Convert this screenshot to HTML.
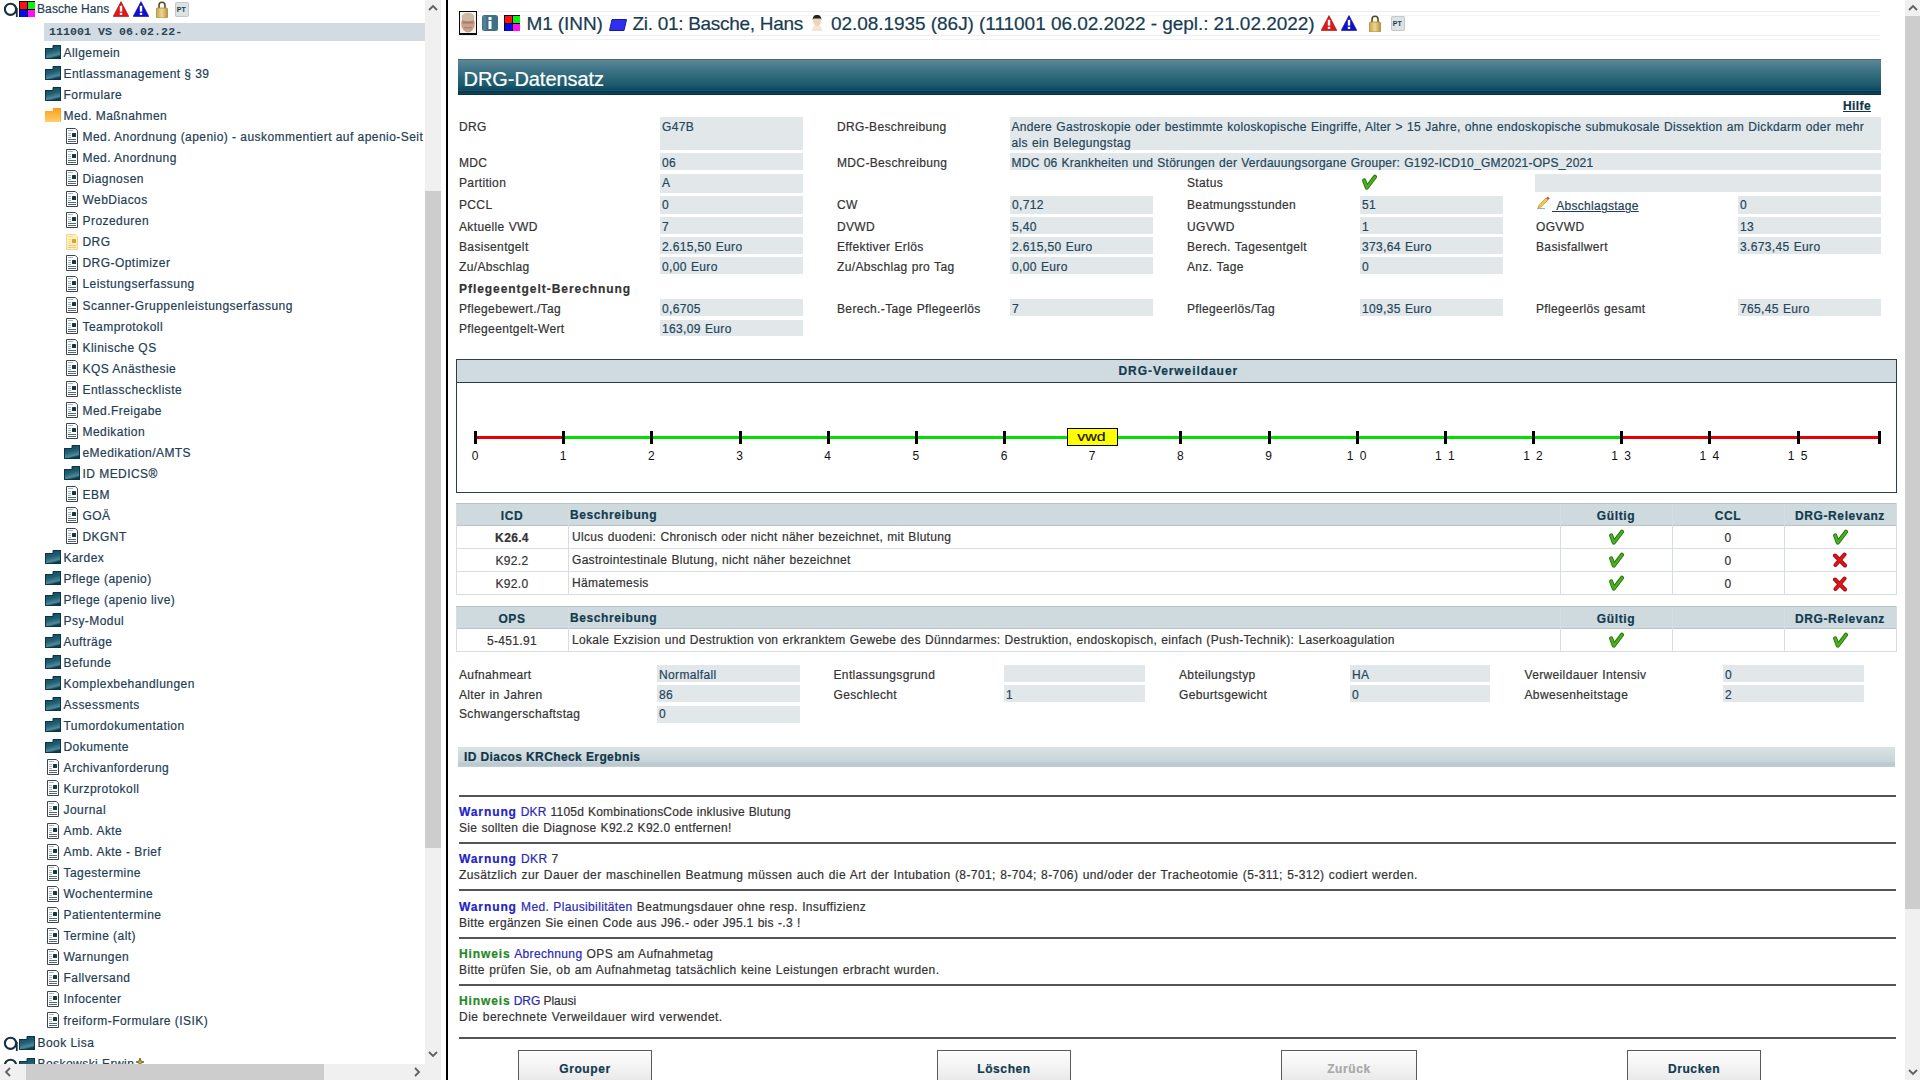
<!DOCTYPE html><html><head><meta charset="utf-8"><title>DRG-Datensatz</title><style>
*{margin:0;padding:0;box-sizing:border-box}
html,body{width:1920px;height:1080px;overflow:hidden;background:#fff}
body{position:relative;font-family:"Liberation Sans", sans-serif;color:#333}
.t{position:absolute;white-space:nowrap;-webkit-text-stroke:0.2px currentColor}
.tr{color:#1f4054;letter-spacing:0.45px}
.lb{color:#333;letter-spacing:0.35px;word-spacing:0.5px}
.vl{color:#22465a;letter-spacing:0.35px;word-spacing:0.5px}
.bx{position:absolute;background:#e2e7ea}
.hd{color:#123b50;font-weight:bold;letter-spacing:0.6px}
.ic{position:absolute}
</style></head><body>
<svg class="ic" style="left:3px;top:2px" width="16" height="16" viewBox="0 0 16 16"><circle cx="7.5" cy="7.3" r="5.6" fill="none" stroke="#16303f" stroke-width="2.1"/><path d="M13.8 6v9" stroke="#16303f" stroke-width="1.8"/></svg>
<svg class="ic" style="left:19px;top:1px" width="16" height="16" viewBox="0 0 16 16"><rect x="0" y="0" width="16" height="16" fill="#100818"/><rect x="1" y="1" width="7" height="7" fill="#ff1010"/><rect x="9" y="1" width="7" height="7" fill="#10f010"/><rect x="1" y="9" width="7" height="7" fill="#0808f0"/><rect x="9" y="9" width="7" height="7" fill="#ff10f8"/></svg>
<div class="t tr" style="left:37px;top:1.34px;font-size:12px;line-height:16px;letter-spacing:0.1px">Basche Hans</div>
<svg class="ic" style="left:113px;top:1px" width="16" height="16" viewBox="0 0 16 16"><path d="M8 0.6L15.8 15.4H0.2z" fill="#e01818" stroke="#a00000" stroke-width="0.6" stroke-linejoin="round"/><rect x="6.8" y="4.8" width="2.4" height="5.8" fill="#fff"/><rect x="6.8" y="11.8" width="2.4" height="2.2" fill="#fff"/></svg>
<svg class="ic" style="left:133px;top:1px" width="16" height="16" viewBox="0 0 16 16"><path d="M8 0.6L15.8 15.4H0.2z" fill="#1010d0" stroke="#000080" stroke-width="0.6" stroke-linejoin="round"/><rect x="6.8" y="4.8" width="2.4" height="5.8" fill="#fff"/><rect x="6.8" y="11.8" width="2.4" height="2.2" fill="#fff"/></svg>
<svg class="ic" style="left:156px;top:1px" width="12" height="17" viewBox="0 0 12 17"><path d="M3 8V4.2a3 3 0 0 1 6 0V8" fill="none" stroke="#5a4a20" stroke-width="1.6"/><defs><linearGradient id="lk156" x1="0" y1="0" x2="1" y2="0"><stop offset="0" stop-color="#c9a850"/><stop offset="0.5" stop-color="#ecd690"/><stop offset="1" stop-color="#b89440"/></linearGradient></defs><rect x="0.5" y="7" width="11" height="10" rx="1" fill="url(#lk156)"/><rect x="0.5" y="7" width="11" height="10" rx="1" fill="none" stroke="#a88a3a" stroke-width="0.8"/></svg>
<svg class="ic" style="left:175px;top:2px" width="14" height="15" viewBox="0 0 14 15"><rect x="0" y="0" width="14" height="15" rx="1.5" fill="#dde2e5"/><rect x="0.5" y="0.5" width="13" height="14" rx="1.5" fill="none" stroke="#c2c8cc"/><text x="1.8" y="10" font-family="Liberation Sans" font-weight="bold" font-size="7" fill="#1e3a4a">PT</text></svg>
<div style="position:absolute;left:44px;top:23px;width:381px;height:18px;background:#d2dbe1"></div>
<div class="t" style="left:49px;top:23.5px;font-family:'Liberation Mono',monospace;font-weight:bold;font-size:11.6px;line-height:16px;color:#2a4558;-webkit-text-stroke:0;letter-spacing:0.05px">111001 VS 06.02.22-</div>
<div style="position:absolute;left:0;top:0;width:425px;height:1064px;overflow:hidden">
<svg class="ic" style="left:45px;top:45px" width="16" height="14" viewBox="0 0 16 14"><defs><linearGradient id="fg45_45" x1="0" y1="0" x2="0.3" y2="1"><stop offset="0" stop-color="#0f4356"/><stop offset="0.55" stop-color="#215f72"/><stop offset="0.85" stop-color="#4d8a9c"/><stop offset="1" stop-color="#0e3c4d"/></linearGradient></defs><path d="M8 0h8v14H0V3h8z" fill="url(#fg45_45)"/><path d="M8 0.5h7.5V13.5H0.5V3.5H8z" fill="none" stroke="#0b3546" stroke-width="1"/></svg>
<div class="t tr" style="left:63.5px;top:45.14px;font-size:12px;line-height:16px;">Allgemein</div>
<svg class="ic" style="left:45px;top:66px" width="16" height="14" viewBox="0 0 16 14"><defs><linearGradient id="fg45_66" x1="0" y1="0" x2="0.3" y2="1"><stop offset="0" stop-color="#0f4356"/><stop offset="0.55" stop-color="#215f72"/><stop offset="0.85" stop-color="#4d8a9c"/><stop offset="1" stop-color="#0e3c4d"/></linearGradient></defs><path d="M8 0h8v14H0V3h8z" fill="url(#fg45_66)"/><path d="M8 0.5h7.5V13.5H0.5V3.5H8z" fill="none" stroke="#0b3546" stroke-width="1"/></svg>
<div class="t tr" style="left:63.5px;top:66.17px;font-size:12px;line-height:16px;">Entlassmanagement § 39</div>
<svg class="ic" style="left:45px;top:87px" width="16" height="14" viewBox="0 0 16 14"><defs><linearGradient id="fg45_87" x1="0" y1="0" x2="0.3" y2="1"><stop offset="0" stop-color="#0f4356"/><stop offset="0.55" stop-color="#215f72"/><stop offset="0.85" stop-color="#4d8a9c"/><stop offset="1" stop-color="#0e3c4d"/></linearGradient></defs><path d="M8 0h8v14H0V3h8z" fill="url(#fg45_87)"/><path d="M8 0.5h7.5V13.5H0.5V3.5H8z" fill="none" stroke="#0b3546" stroke-width="1"/></svg>
<div class="t tr" style="left:63.5px;top:87.20px;font-size:12px;line-height:16px;">Formulare</div>
<svg class="ic" style="left:45px;top:108px" width="16" height="14" viewBox="0 0 16 14"><defs><linearGradient id="og45_108" x1="0" y1="0" x2="0" y2="1"><stop offset="0" stop-color="#ff9d10"/><stop offset="1" stop-color="#ffcf70"/></linearGradient></defs><path d="M8 0h8v14H0V3h8z" fill="url(#og45_108)"/><path d="M8.5 0.5h7v13" fill="none" stroke="#f0a030" stroke-width="1" opacity="0.6"/></svg>
<div class="t tr" style="left:63.5px;top:108.23px;font-size:12px;line-height:16px;">Med. Maßnahmen</div>
<svg class="ic" style="left:66px;top:128px" width="12" height="16" viewBox="0 0 12 16"><path d="M0.5 15.5V0.5H9.3L11.5 2.8V15.5z" fill="#fff" stroke="#3a474d" stroke-width="1"/><path d="M2 2.5h5M2 5.5h3M2 7.5h3M2 9.5h3" stroke="#9fb7bf" stroke-width="1"/><path d="M2 11.5h8M2 13.5h8" stroke="#556870" stroke-width="1"/><rect x="6" y="5" width="4" height="4" rx="0.6" fill="#123a3c"/></svg>
<div class="t tr" style="left:82.5px;top:129.26px;font-size:12px;line-height:16px;">Med. Anordnung (apenio) - auskommentiert auf apenio-Seit</div>
<svg class="ic" style="left:66px;top:149px" width="12" height="16" viewBox="0 0 12 16"><path d="M0.5 15.5V0.5H9.3L11.5 2.8V15.5z" fill="#fff" stroke="#3a474d" stroke-width="1"/><path d="M2 2.5h5M2 5.5h3M2 7.5h3M2 9.5h3" stroke="#9fb7bf" stroke-width="1"/><path d="M2 11.5h8M2 13.5h8" stroke="#556870" stroke-width="1"/><rect x="6" y="5" width="4" height="4" rx="0.6" fill="#123a3c"/></svg>
<div class="t tr" style="left:82.5px;top:150.29px;font-size:12px;line-height:16px;">Med. Anordnung</div>
<svg class="ic" style="left:66px;top:170px" width="12" height="16" viewBox="0 0 12 16"><path d="M0.5 15.5V0.5H9.3L11.5 2.8V15.5z" fill="#fff" stroke="#3a474d" stroke-width="1"/><path d="M2 2.5h5M2 5.5h3M2 7.5h3M2 9.5h3" stroke="#9fb7bf" stroke-width="1"/><path d="M2 11.5h8M2 13.5h8" stroke="#556870" stroke-width="1"/><rect x="6" y="5" width="4" height="4" rx="0.6" fill="#123a3c"/></svg>
<div class="t tr" style="left:82.5px;top:171.32px;font-size:12px;line-height:16px;">Diagnosen</div>
<svg class="ic" style="left:66px;top:191px" width="12" height="16" viewBox="0 0 12 16"><path d="M0.5 15.5V0.5H9.3L11.5 2.8V15.5z" fill="#fff" stroke="#3a474d" stroke-width="1"/><path d="M2 2.5h5M2 5.5h3M2 7.5h3M2 9.5h3" stroke="#9fb7bf" stroke-width="1"/><path d="M2 11.5h8M2 13.5h8" stroke="#556870" stroke-width="1"/><rect x="6" y="5" width="4" height="4" rx="0.6" fill="#123a3c"/></svg>
<div class="t tr" style="left:82.5px;top:192.35px;font-size:12px;line-height:16px;">WebDiacos</div>
<svg class="ic" style="left:66px;top:212px" width="12" height="16" viewBox="0 0 12 16"><path d="M0.5 15.5V0.5H9.3L11.5 2.8V15.5z" fill="#fff" stroke="#3a474d" stroke-width="1"/><path d="M2 2.5h5M2 5.5h3M2 7.5h3M2 9.5h3" stroke="#9fb7bf" stroke-width="1"/><path d="M2 11.5h8M2 13.5h8" stroke="#556870" stroke-width="1"/><rect x="6" y="5" width="4" height="4" rx="0.6" fill="#123a3c"/></svg>
<div class="t tr" style="left:82.5px;top:213.38px;font-size:12px;line-height:16px;">Prozeduren</div>
<svg class="ic" style="left:66px;top:234px" width="12" height="16" viewBox="0 0 12 16"><path d="M0.5 15.5V0.5H9.3L11.5 2.8V15.5z" fill="#fff2c2" stroke="#f2d58a" stroke-width="1"/><path d="M2 2.5h5M2 5.5h3M2 7.5h3M2 9.5h3" stroke="#f8dc90" stroke-width="1"/><path d="M2 11.5h8M2 13.5h8" stroke="#f0c878" stroke-width="1"/><rect x="6" y="5" width="4" height="4" rx="0.6" fill="#dca030"/></svg>
<div class="t tr" style="left:82.5px;top:234.41px;font-size:12px;line-height:16px;">DRG</div>
<svg class="ic" style="left:66px;top:255px" width="12" height="16" viewBox="0 0 12 16"><path d="M0.5 15.5V0.5H9.3L11.5 2.8V15.5z" fill="#fff" stroke="#3a474d" stroke-width="1"/><path d="M2 2.5h5M2 5.5h3M2 7.5h3M2 9.5h3" stroke="#9fb7bf" stroke-width="1"/><path d="M2 11.5h8M2 13.5h8" stroke="#556870" stroke-width="1"/><rect x="6" y="5" width="4" height="4" rx="0.6" fill="#123a3c"/></svg>
<div class="t tr" style="left:82.5px;top:255.44px;font-size:12px;line-height:16px;">DRG-Optimizer</div>
<svg class="ic" style="left:66px;top:276px" width="12" height="16" viewBox="0 0 12 16"><path d="M0.5 15.5V0.5H9.3L11.5 2.8V15.5z" fill="#fff" stroke="#3a474d" stroke-width="1"/><path d="M2 2.5h5M2 5.5h3M2 7.5h3M2 9.5h3" stroke="#9fb7bf" stroke-width="1"/><path d="M2 11.5h8M2 13.5h8" stroke="#556870" stroke-width="1"/><rect x="6" y="5" width="4" height="4" rx="0.6" fill="#123a3c"/></svg>
<div class="t tr" style="left:82.5px;top:276.47px;font-size:12px;line-height:16px;">Leistungserfassung</div>
<svg class="ic" style="left:66px;top:297px" width="12" height="16" viewBox="0 0 12 16"><path d="M0.5 15.5V0.5H9.3L11.5 2.8V15.5z" fill="#fff" stroke="#3a474d" stroke-width="1"/><path d="M2 2.5h5M2 5.5h3M2 7.5h3M2 9.5h3" stroke="#9fb7bf" stroke-width="1"/><path d="M2 11.5h8M2 13.5h8" stroke="#556870" stroke-width="1"/><rect x="6" y="5" width="4" height="4" rx="0.6" fill="#123a3c"/></svg>
<div class="t tr" style="left:82.5px;top:297.50px;font-size:12px;line-height:16px;">Scanner-Gruppenleistungserfassung</div>
<svg class="ic" style="left:66px;top:318px" width="12" height="16" viewBox="0 0 12 16"><path d="M0.5 15.5V0.5H9.3L11.5 2.8V15.5z" fill="#fff" stroke="#3a474d" stroke-width="1"/><path d="M2 2.5h5M2 5.5h3M2 7.5h3M2 9.5h3" stroke="#9fb7bf" stroke-width="1"/><path d="M2 11.5h8M2 13.5h8" stroke="#556870" stroke-width="1"/><rect x="6" y="5" width="4" height="4" rx="0.6" fill="#123a3c"/></svg>
<div class="t tr" style="left:82.5px;top:318.53px;font-size:12px;line-height:16px;">Teamprotokoll</div>
<svg class="ic" style="left:66px;top:339px" width="12" height="16" viewBox="0 0 12 16"><path d="M0.5 15.5V0.5H9.3L11.5 2.8V15.5z" fill="#fff" stroke="#3a474d" stroke-width="1"/><path d="M2 2.5h5M2 5.5h3M2 7.5h3M2 9.5h3" stroke="#9fb7bf" stroke-width="1"/><path d="M2 11.5h8M2 13.5h8" stroke="#556870" stroke-width="1"/><rect x="6" y="5" width="4" height="4" rx="0.6" fill="#123a3c"/></svg>
<div class="t tr" style="left:82.5px;top:339.56px;font-size:12px;line-height:16px;">Klinische QS</div>
<svg class="ic" style="left:66px;top:360px" width="12" height="16" viewBox="0 0 12 16"><path d="M0.5 15.5V0.5H9.3L11.5 2.8V15.5z" fill="#fff" stroke="#3a474d" stroke-width="1"/><path d="M2 2.5h5M2 5.5h3M2 7.5h3M2 9.5h3" stroke="#9fb7bf" stroke-width="1"/><path d="M2 11.5h8M2 13.5h8" stroke="#556870" stroke-width="1"/><rect x="6" y="5" width="4" height="4" rx="0.6" fill="#123a3c"/></svg>
<div class="t tr" style="left:82.5px;top:360.59px;font-size:12px;line-height:16px;">KQS Anästhesie</div>
<svg class="ic" style="left:66px;top:381px" width="12" height="16" viewBox="0 0 12 16"><path d="M0.5 15.5V0.5H9.3L11.5 2.8V15.5z" fill="#fff" stroke="#3a474d" stroke-width="1"/><path d="M2 2.5h5M2 5.5h3M2 7.5h3M2 9.5h3" stroke="#9fb7bf" stroke-width="1"/><path d="M2 11.5h8M2 13.5h8" stroke="#556870" stroke-width="1"/><rect x="6" y="5" width="4" height="4" rx="0.6" fill="#123a3c"/></svg>
<div class="t tr" style="left:82.5px;top:381.62px;font-size:12px;line-height:16px;">Entlasscheckliste</div>
<svg class="ic" style="left:66px;top:402px" width="12" height="16" viewBox="0 0 12 16"><path d="M0.5 15.5V0.5H9.3L11.5 2.8V15.5z" fill="#fff" stroke="#3a474d" stroke-width="1"/><path d="M2 2.5h5M2 5.5h3M2 7.5h3M2 9.5h3" stroke="#9fb7bf" stroke-width="1"/><path d="M2 11.5h8M2 13.5h8" stroke="#556870" stroke-width="1"/><rect x="6" y="5" width="4" height="4" rx="0.6" fill="#123a3c"/></svg>
<div class="t tr" style="left:82.5px;top:402.65px;font-size:12px;line-height:16px;">Med.Freigabe</div>
<svg class="ic" style="left:66px;top:423px" width="12" height="16" viewBox="0 0 12 16"><path d="M0.5 15.5V0.5H9.3L11.5 2.8V15.5z" fill="#fff" stroke="#3a474d" stroke-width="1"/><path d="M2 2.5h5M2 5.5h3M2 7.5h3M2 9.5h3" stroke="#9fb7bf" stroke-width="1"/><path d="M2 11.5h8M2 13.5h8" stroke="#556870" stroke-width="1"/><rect x="6" y="5" width="4" height="4" rx="0.6" fill="#123a3c"/></svg>
<div class="t tr" style="left:82.5px;top:423.68px;font-size:12px;line-height:16px;">Medikation</div>
<svg class="ic" style="left:64px;top:445px" width="16" height="14" viewBox="0 0 16 14"><defs><linearGradient id="fg64_445" x1="0" y1="0" x2="0.3" y2="1"><stop offset="0" stop-color="#0f4356"/><stop offset="0.55" stop-color="#215f72"/><stop offset="0.85" stop-color="#4d8a9c"/><stop offset="1" stop-color="#0e3c4d"/></linearGradient></defs><path d="M8 0h8v14H0V3h8z" fill="url(#fg64_445)"/><path d="M8 0.5h7.5V13.5H0.5V3.5H8z" fill="none" stroke="#0b3546" stroke-width="1"/></svg>
<div class="t tr" style="left:82.5px;top:444.71px;font-size:12px;line-height:16px;">eMedikation/AMTS</div>
<svg class="ic" style="left:64px;top:466px" width="16" height="14" viewBox="0 0 16 14"><defs><linearGradient id="fg64_466" x1="0" y1="0" x2="0.3" y2="1"><stop offset="0" stop-color="#0f4356"/><stop offset="0.55" stop-color="#215f72"/><stop offset="0.85" stop-color="#4d8a9c"/><stop offset="1" stop-color="#0e3c4d"/></linearGradient></defs><path d="M8 0h8v14H0V3h8z" fill="url(#fg64_466)"/><path d="M8 0.5h7.5V13.5H0.5V3.5H8z" fill="none" stroke="#0b3546" stroke-width="1"/></svg>
<div class="t tr" style="left:82.5px;top:465.74px;font-size:12px;line-height:16px;">ID MEDICS®</div>
<svg class="ic" style="left:66px;top:486px" width="12" height="16" viewBox="0 0 12 16"><path d="M0.5 15.5V0.5H9.3L11.5 2.8V15.5z" fill="#fff" stroke="#3a474d" stroke-width="1"/><path d="M2 2.5h5M2 5.5h3M2 7.5h3M2 9.5h3" stroke="#9fb7bf" stroke-width="1"/><path d="M2 11.5h8M2 13.5h8" stroke="#556870" stroke-width="1"/><rect x="6" y="5" width="4" height="4" rx="0.6" fill="#123a3c"/></svg>
<div class="t tr" style="left:82.5px;top:486.77px;font-size:12px;line-height:16px;">EBM</div>
<svg class="ic" style="left:66px;top:507px" width="12" height="16" viewBox="0 0 12 16"><path d="M0.5 15.5V0.5H9.3L11.5 2.8V15.5z" fill="#fff" stroke="#3a474d" stroke-width="1"/><path d="M2 2.5h5M2 5.5h3M2 7.5h3M2 9.5h3" stroke="#9fb7bf" stroke-width="1"/><path d="M2 11.5h8M2 13.5h8" stroke="#556870" stroke-width="1"/><rect x="6" y="5" width="4" height="4" rx="0.6" fill="#123a3c"/></svg>
<div class="t tr" style="left:82.5px;top:507.80px;font-size:12px;line-height:16px;">GOÄ</div>
<svg class="ic" style="left:66px;top:528px" width="12" height="16" viewBox="0 0 12 16"><path d="M0.5 15.5V0.5H9.3L11.5 2.8V15.5z" fill="#fff" stroke="#3a474d" stroke-width="1"/><path d="M2 2.5h5M2 5.5h3M2 7.5h3M2 9.5h3" stroke="#9fb7bf" stroke-width="1"/><path d="M2 11.5h8M2 13.5h8" stroke="#556870" stroke-width="1"/><rect x="6" y="5" width="4" height="4" rx="0.6" fill="#123a3c"/></svg>
<div class="t tr" style="left:82.5px;top:528.83px;font-size:12px;line-height:16px;">DKGNT</div>
<svg class="ic" style="left:45px;top:550px" width="16" height="14" viewBox="0 0 16 14"><defs><linearGradient id="fg45_550" x1="0" y1="0" x2="0.3" y2="1"><stop offset="0" stop-color="#0f4356"/><stop offset="0.55" stop-color="#215f72"/><stop offset="0.85" stop-color="#4d8a9c"/><stop offset="1" stop-color="#0e3c4d"/></linearGradient></defs><path d="M8 0h8v14H0V3h8z" fill="url(#fg45_550)"/><path d="M8 0.5h7.5V13.5H0.5V3.5H8z" fill="none" stroke="#0b3546" stroke-width="1"/></svg>
<div class="t tr" style="left:63.5px;top:549.86px;font-size:12px;line-height:16px;">Kardex</div>
<svg class="ic" style="left:45px;top:571px" width="16" height="14" viewBox="0 0 16 14"><defs><linearGradient id="fg45_571" x1="0" y1="0" x2="0.3" y2="1"><stop offset="0" stop-color="#0f4356"/><stop offset="0.55" stop-color="#215f72"/><stop offset="0.85" stop-color="#4d8a9c"/><stop offset="1" stop-color="#0e3c4d"/></linearGradient></defs><path d="M8 0h8v14H0V3h8z" fill="url(#fg45_571)"/><path d="M8 0.5h7.5V13.5H0.5V3.5H8z" fill="none" stroke="#0b3546" stroke-width="1"/></svg>
<div class="t tr" style="left:63.5px;top:570.89px;font-size:12px;line-height:16px;">Pflege (apenio)</div>
<svg class="ic" style="left:45px;top:592px" width="16" height="14" viewBox="0 0 16 14"><defs><linearGradient id="fg45_592" x1="0" y1="0" x2="0.3" y2="1"><stop offset="0" stop-color="#0f4356"/><stop offset="0.55" stop-color="#215f72"/><stop offset="0.85" stop-color="#4d8a9c"/><stop offset="1" stop-color="#0e3c4d"/></linearGradient></defs><path d="M8 0h8v14H0V3h8z" fill="url(#fg45_592)"/><path d="M8 0.5h7.5V13.5H0.5V3.5H8z" fill="none" stroke="#0b3546" stroke-width="1"/></svg>
<div class="t tr" style="left:63.5px;top:591.92px;font-size:12px;line-height:16px;">Pflege (apenio live)</div>
<svg class="ic" style="left:45px;top:613px" width="16" height="14" viewBox="0 0 16 14"><defs><linearGradient id="fg45_613" x1="0" y1="0" x2="0.3" y2="1"><stop offset="0" stop-color="#0f4356"/><stop offset="0.55" stop-color="#215f72"/><stop offset="0.85" stop-color="#4d8a9c"/><stop offset="1" stop-color="#0e3c4d"/></linearGradient></defs><path d="M8 0h8v14H0V3h8z" fill="url(#fg45_613)"/><path d="M8 0.5h7.5V13.5H0.5V3.5H8z" fill="none" stroke="#0b3546" stroke-width="1"/></svg>
<div class="t tr" style="left:63.5px;top:612.95px;font-size:12px;line-height:16px;">Psy-Modul</div>
<svg class="ic" style="left:45px;top:634px" width="16" height="14" viewBox="0 0 16 14"><defs><linearGradient id="fg45_634" x1="0" y1="0" x2="0.3" y2="1"><stop offset="0" stop-color="#0f4356"/><stop offset="0.55" stop-color="#215f72"/><stop offset="0.85" stop-color="#4d8a9c"/><stop offset="1" stop-color="#0e3c4d"/></linearGradient></defs><path d="M8 0h8v14H0V3h8z" fill="url(#fg45_634)"/><path d="M8 0.5h7.5V13.5H0.5V3.5H8z" fill="none" stroke="#0b3546" stroke-width="1"/></svg>
<div class="t tr" style="left:63.5px;top:633.98px;font-size:12px;line-height:16px;">Aufträge</div>
<svg class="ic" style="left:45px;top:655px" width="16" height="14" viewBox="0 0 16 14"><defs><linearGradient id="fg45_655" x1="0" y1="0" x2="0.3" y2="1"><stop offset="0" stop-color="#0f4356"/><stop offset="0.55" stop-color="#215f72"/><stop offset="0.85" stop-color="#4d8a9c"/><stop offset="1" stop-color="#0e3c4d"/></linearGradient></defs><path d="M8 0h8v14H0V3h8z" fill="url(#fg45_655)"/><path d="M8 0.5h7.5V13.5H0.5V3.5H8z" fill="none" stroke="#0b3546" stroke-width="1"/></svg>
<div class="t tr" style="left:63.5px;top:655.01px;font-size:12px;line-height:16px;">Befunde</div>
<svg class="ic" style="left:45px;top:676px" width="16" height="14" viewBox="0 0 16 14"><defs><linearGradient id="fg45_676" x1="0" y1="0" x2="0.3" y2="1"><stop offset="0" stop-color="#0f4356"/><stop offset="0.55" stop-color="#215f72"/><stop offset="0.85" stop-color="#4d8a9c"/><stop offset="1" stop-color="#0e3c4d"/></linearGradient></defs><path d="M8 0h8v14H0V3h8z" fill="url(#fg45_676)"/><path d="M8 0.5h7.5V13.5H0.5V3.5H8z" fill="none" stroke="#0b3546" stroke-width="1"/></svg>
<div class="t tr" style="left:63.5px;top:676.04px;font-size:12px;line-height:16px;">Komplexbehandlungen</div>
<svg class="ic" style="left:45px;top:697px" width="16" height="14" viewBox="0 0 16 14"><defs><linearGradient id="fg45_697" x1="0" y1="0" x2="0.3" y2="1"><stop offset="0" stop-color="#0f4356"/><stop offset="0.55" stop-color="#215f72"/><stop offset="0.85" stop-color="#4d8a9c"/><stop offset="1" stop-color="#0e3c4d"/></linearGradient></defs><path d="M8 0h8v14H0V3h8z" fill="url(#fg45_697)"/><path d="M8 0.5h7.5V13.5H0.5V3.5H8z" fill="none" stroke="#0b3546" stroke-width="1"/></svg>
<div class="t tr" style="left:63.5px;top:697.07px;font-size:12px;line-height:16px;">Assessments</div>
<svg class="ic" style="left:45px;top:718px" width="16" height="14" viewBox="0 0 16 14"><defs><linearGradient id="fg45_718" x1="0" y1="0" x2="0.3" y2="1"><stop offset="0" stop-color="#0f4356"/><stop offset="0.55" stop-color="#215f72"/><stop offset="0.85" stop-color="#4d8a9c"/><stop offset="1" stop-color="#0e3c4d"/></linearGradient></defs><path d="M8 0h8v14H0V3h8z" fill="url(#fg45_718)"/><path d="M8 0.5h7.5V13.5H0.5V3.5H8z" fill="none" stroke="#0b3546" stroke-width="1"/></svg>
<div class="t tr" style="left:63.5px;top:718.10px;font-size:12px;line-height:16px;">Tumordokumentation</div>
<svg class="ic" style="left:45px;top:739px" width="16" height="14" viewBox="0 0 16 14"><defs><linearGradient id="fg45_739" x1="0" y1="0" x2="0.3" y2="1"><stop offset="0" stop-color="#0f4356"/><stop offset="0.55" stop-color="#215f72"/><stop offset="0.85" stop-color="#4d8a9c"/><stop offset="1" stop-color="#0e3c4d"/></linearGradient></defs><path d="M8 0h8v14H0V3h8z" fill="url(#fg45_739)"/><path d="M8 0.5h7.5V13.5H0.5V3.5H8z" fill="none" stroke="#0b3546" stroke-width="1"/></svg>
<div class="t tr" style="left:63.5px;top:739.13px;font-size:12px;line-height:16px;">Dokumente</div>
<svg class="ic" style="left:47px;top:759px" width="12" height="16" viewBox="0 0 12 16"><path d="M0.5 15.5V0.5H9.3L11.5 2.8V15.5z" fill="#fff" stroke="#3a474d" stroke-width="1"/><path d="M2 2.5h5M2 5.5h3M2 7.5h3M2 9.5h3" stroke="#9fb7bf" stroke-width="1"/><path d="M2 11.5h8M2 13.5h8" stroke="#556870" stroke-width="1"/><rect x="6" y="5" width="4" height="4" rx="0.6" fill="#123a3c"/></svg>
<div class="t tr" style="left:63.5px;top:760.16px;font-size:12px;line-height:16px;">Archivanforderung</div>
<svg class="ic" style="left:47px;top:780px" width="12" height="16" viewBox="0 0 12 16"><path d="M0.5 15.5V0.5H9.3L11.5 2.8V15.5z" fill="#fff" stroke="#3a474d" stroke-width="1"/><path d="M2 2.5h5M2 5.5h3M2 7.5h3M2 9.5h3" stroke="#9fb7bf" stroke-width="1"/><path d="M2 11.5h8M2 13.5h8" stroke="#556870" stroke-width="1"/><rect x="6" y="5" width="4" height="4" rx="0.6" fill="#123a3c"/></svg>
<div class="t tr" style="left:63.5px;top:781.19px;font-size:12px;line-height:16px;">Kurzprotokoll</div>
<svg class="ic" style="left:47px;top:801px" width="12" height="16" viewBox="0 0 12 16"><path d="M0.5 15.5V0.5H9.3L11.5 2.8V15.5z" fill="#fff" stroke="#3a474d" stroke-width="1"/><path d="M2 2.5h5M2 5.5h3M2 7.5h3M2 9.5h3" stroke="#9fb7bf" stroke-width="1"/><path d="M2 11.5h8M2 13.5h8" stroke="#556870" stroke-width="1"/><rect x="6" y="5" width="4" height="4" rx="0.6" fill="#123a3c"/></svg>
<div class="t tr" style="left:63.5px;top:802.22px;font-size:12px;line-height:16px;">Journal</div>
<svg class="ic" style="left:47px;top:823px" width="12" height="16" viewBox="0 0 12 16"><path d="M0.5 15.5V0.5H9.3L11.5 2.8V15.5z" fill="#fff" stroke="#3a474d" stroke-width="1"/><path d="M2 2.5h5M2 5.5h3M2 7.5h3M2 9.5h3" stroke="#9fb7bf" stroke-width="1"/><path d="M2 11.5h8M2 13.5h8" stroke="#556870" stroke-width="1"/><rect x="6" y="5" width="4" height="4" rx="0.6" fill="#123a3c"/></svg>
<div class="t tr" style="left:63.5px;top:823.25px;font-size:12px;line-height:16px;">Amb. Akte</div>
<svg class="ic" style="left:47px;top:844px" width="12" height="16" viewBox="0 0 12 16"><path d="M0.5 15.5V0.5H9.3L11.5 2.8V15.5z" fill="#fff" stroke="#3a474d" stroke-width="1"/><path d="M2 2.5h5M2 5.5h3M2 7.5h3M2 9.5h3" stroke="#9fb7bf" stroke-width="1"/><path d="M2 11.5h8M2 13.5h8" stroke="#556870" stroke-width="1"/><rect x="6" y="5" width="4" height="4" rx="0.6" fill="#123a3c"/></svg>
<div class="t tr" style="left:63.5px;top:844.28px;font-size:12px;line-height:16px;">Amb. Akte - Brief</div>
<svg class="ic" style="left:47px;top:865px" width="12" height="16" viewBox="0 0 12 16"><path d="M0.5 15.5V0.5H9.3L11.5 2.8V15.5z" fill="#fff" stroke="#3a474d" stroke-width="1"/><path d="M2 2.5h5M2 5.5h3M2 7.5h3M2 9.5h3" stroke="#9fb7bf" stroke-width="1"/><path d="M2 11.5h8M2 13.5h8" stroke="#556870" stroke-width="1"/><rect x="6" y="5" width="4" height="4" rx="0.6" fill="#123a3c"/></svg>
<div class="t tr" style="left:63.5px;top:865.31px;font-size:12px;line-height:16px;">Tagestermine</div>
<svg class="ic" style="left:47px;top:886px" width="12" height="16" viewBox="0 0 12 16"><path d="M0.5 15.5V0.5H9.3L11.5 2.8V15.5z" fill="#fff" stroke="#3a474d" stroke-width="1"/><path d="M2 2.5h5M2 5.5h3M2 7.5h3M2 9.5h3" stroke="#9fb7bf" stroke-width="1"/><path d="M2 11.5h8M2 13.5h8" stroke="#556870" stroke-width="1"/><rect x="6" y="5" width="4" height="4" rx="0.6" fill="#123a3c"/></svg>
<div class="t tr" style="left:63.5px;top:886.34px;font-size:12px;line-height:16px;">Wochentermine</div>
<svg class="ic" style="left:47px;top:907px" width="12" height="16" viewBox="0 0 12 16"><path d="M0.5 15.5V0.5H9.3L11.5 2.8V15.5z" fill="#fff" stroke="#3a474d" stroke-width="1"/><path d="M2 2.5h5M2 5.5h3M2 7.5h3M2 9.5h3" stroke="#9fb7bf" stroke-width="1"/><path d="M2 11.5h8M2 13.5h8" stroke="#556870" stroke-width="1"/><rect x="6" y="5" width="4" height="4" rx="0.6" fill="#123a3c"/></svg>
<div class="t tr" style="left:63.5px;top:907.37px;font-size:12px;line-height:16px;">Patiententermine</div>
<svg class="ic" style="left:47px;top:928px" width="12" height="16" viewBox="0 0 12 16"><path d="M0.5 15.5V0.5H9.3L11.5 2.8V15.5z" fill="#fff" stroke="#3a474d" stroke-width="1"/><path d="M2 2.5h5M2 5.5h3M2 7.5h3M2 9.5h3" stroke="#9fb7bf" stroke-width="1"/><path d="M2 11.5h8M2 13.5h8" stroke="#556870" stroke-width="1"/><rect x="6" y="5" width="4" height="4" rx="0.6" fill="#123a3c"/></svg>
<div class="t tr" style="left:63.5px;top:928.40px;font-size:12px;line-height:16px;">Termine (alt)</div>
<svg class="ic" style="left:47px;top:949px" width="12" height="16" viewBox="0 0 12 16"><path d="M0.5 15.5V0.5H9.3L11.5 2.8V15.5z" fill="#fff" stroke="#3a474d" stroke-width="1"/><path d="M2 2.5h5M2 5.5h3M2 7.5h3M2 9.5h3" stroke="#9fb7bf" stroke-width="1"/><path d="M2 11.5h8M2 13.5h8" stroke="#556870" stroke-width="1"/><rect x="6" y="5" width="4" height="4" rx="0.6" fill="#123a3c"/></svg>
<div class="t tr" style="left:63.5px;top:949.43px;font-size:12px;line-height:16px;">Warnungen</div>
<svg class="ic" style="left:47px;top:970px" width="12" height="16" viewBox="0 0 12 16"><path d="M0.5 15.5V0.5H9.3L11.5 2.8V15.5z" fill="#fff" stroke="#3a474d" stroke-width="1"/><path d="M2 2.5h5M2 5.5h3M2 7.5h3M2 9.5h3" stroke="#9fb7bf" stroke-width="1"/><path d="M2 11.5h8M2 13.5h8" stroke="#556870" stroke-width="1"/><rect x="6" y="5" width="4" height="4" rx="0.6" fill="#123a3c"/></svg>
<div class="t tr" style="left:63.5px;top:970.46px;font-size:12px;line-height:16px;">Fallversand</div>
<svg class="ic" style="left:47px;top:991px" width="12" height="16" viewBox="0 0 12 16"><path d="M0.5 15.5V0.5H9.3L11.5 2.8V15.5z" fill="#fff" stroke="#3a474d" stroke-width="1"/><path d="M2 2.5h5M2 5.5h3M2 7.5h3M2 9.5h3" stroke="#9fb7bf" stroke-width="1"/><path d="M2 11.5h8M2 13.5h8" stroke="#556870" stroke-width="1"/><rect x="6" y="5" width="4" height="4" rx="0.6" fill="#123a3c"/></svg>
<div class="t tr" style="left:63.5px;top:991.49px;font-size:12px;line-height:16px;">Infocenter</div>
<svg class="ic" style="left:47px;top:1012px" width="12" height="16" viewBox="0 0 12 16"><path d="M0.5 15.5V0.5H9.3L11.5 2.8V15.5z" fill="#fff" stroke="#3a474d" stroke-width="1"/><path d="M2 2.5h5M2 5.5h3M2 7.5h3M2 9.5h3" stroke="#9fb7bf" stroke-width="1"/><path d="M2 11.5h8M2 13.5h8" stroke="#556870" stroke-width="1"/><rect x="6" y="5" width="4" height="4" rx="0.6" fill="#123a3c"/></svg>
<div class="t tr" style="left:63.5px;top:1012.52px;font-size:12px;line-height:16px;">freiform-Formulare (ISIK)</div>
<svg class="ic" style="left:3px;top:1036px" width="16" height="16" viewBox="0 0 16 16"><circle cx="7.5" cy="7.3" r="5.6" fill="none" stroke="#16303f" stroke-width="2.1"/><path d="M13.8 6v9" stroke="#16303f" stroke-width="1.8"/></svg>
<svg class="ic" style="left:19px;top:1036px" width="16" height="14" viewBox="0 0 16 14"><defs><linearGradient id="fg19_1036" x1="0" y1="0" x2="0.3" y2="1"><stop offset="0" stop-color="#0f4356"/><stop offset="0.55" stop-color="#215f72"/><stop offset="0.85" stop-color="#4d8a9c"/><stop offset="1" stop-color="#0e3c4d"/></linearGradient></defs><path d="M8 0h8v14H0V3h8z" fill="url(#fg19_1036)"/><path d="M8 0.5h7.5V13.5H0.5V3.5H8z" fill="none" stroke="#0b3546" stroke-width="1"/></svg>
<div class="t tr" style="left:37.5px;top:1035.34px;font-size:12px;line-height:16px;">Book Lisa</div>
<svg class="ic" style="left:3px;top:1058px" width="16" height="16" viewBox="0 0 16 16"><circle cx="7.5" cy="7.3" r="5.6" fill="none" stroke="#16303f" stroke-width="2.1"/><path d="M13.8 6v9" stroke="#16303f" stroke-width="1.8"/></svg>
<svg class="ic" style="left:19px;top:1058px" width="16" height="14" viewBox="0 0 16 14"><defs><linearGradient id="fg19_1058" x1="0" y1="0" x2="0.3" y2="1"><stop offset="0" stop-color="#0f4356"/><stop offset="0.55" stop-color="#215f72"/><stop offset="0.85" stop-color="#4d8a9c"/><stop offset="1" stop-color="#0e3c4d"/></linearGradient></defs><path d="M8 0h8v14H0V3h8z" fill="url(#fg19_1058)"/><path d="M8 0.5h7.5V13.5H0.5V3.5H8z" fill="none" stroke="#0b3546" stroke-width="1"/></svg>
<div class="t tr" style="left:37.5px;top:1056.34px;font-size:12px;line-height:16px;">Boskowski Erwin</div>
<svg class="ic" style="left:136px;top:1058px" width="8" height="8" viewBox="0 0 8 8"><path d="M4 0L5 3L8 4L5 5L4 8L3 5L0 4L3 3z" fill="#e0b000" stroke="#222" stroke-width="0.6"/></svg>
</div>
<div style="position:absolute;left:425px;top:0px;width:16px;height:1064px;background:#f0f0f0"></div>
<div style="position:absolute;left:425px;top:191px;width:16px;height:657px;background:#cdcdcd"></div>
<div style="position:absolute;left:0px;top:1064px;width:425px;height:16px;background:#f0f0f0"></div>
<div style="position:absolute;left:26px;top:1064px;width:298px;height:16px;background:#cdcdcd"></div>
<div style="position:absolute;left:425px;top:1064px;width:16px;height:16px;background:#f0f0f0"></div>
<svg class="ic" style="left:428px;top:4px" width="10" height="8" viewBox="0 0 10 8"><path d="M1 6L5 2L9 6" fill="none" stroke="#606060" stroke-width="1.8"/></svg>
<svg class="ic" style="left:428px;top:1050px" width="10" height="8" viewBox="0 0 10 8"><path d="M1 2L5 6L9 2" fill="none" stroke="#606060" stroke-width="1.8"/></svg>
<svg class="ic" style="left:4px;top:1067px" width="8" height="10" viewBox="0 0 8 10"><path d="M6 1L2 5L6 9" fill="none" stroke="#606060" stroke-width="1.8"/></svg>
<svg class="ic" style="left:413px;top:1067px" width="8" height="10" viewBox="0 0 8 10"><path d="M2 1L6 5L2 9" fill="none" stroke="#606060" stroke-width="1.8"/></svg>
<div style="position:absolute;left:446px;top:0px;width:2px;height:1080px;background:#000"></div>
<div style="position:absolute;left:1905px;top:0px;width:15px;height:1080px;background:#f0f0f0"></div>
<div style="position:absolute;left:1905px;top:16px;width:15px;height:893px;background:#cdcdcd"></div>
<svg class="ic" style="left:1908px;top:4px" width="10" height="8" viewBox="0 0 10 8"><path d="M1 6L5 2L9 6" fill="none" stroke="#606060" stroke-width="1.8"/></svg>
<svg class="ic" style="left:1908px;top:1068px" width="10" height="8" viewBox="0 0 10 8"><path d="M1 2L5 6L9 2" fill="none" stroke="#606060" stroke-width="1.8"/></svg>
<div style="position:absolute;left:457px;top:11px;width:1423px;height:1px;background:#ececec"></div>
<div style="position:absolute;left:477px;top:15px;width:1403px;height:1px;background:#f5f5f5"></div>
<div style="position:absolute;left:457px;top:35px;width:1423px;height:1px;background:#ebebeb"></div>
<div style="position:absolute;left:457px;top:39px;width:1423px;height:1px;background:#f3f3f3"></div>
<svg class="ic" style="left:459px;top:11px" width="18" height="24" viewBox="0 0 18 24"><rect x="0" y="0" width="18" height="24" fill="#0a0a0a"/><rect x="1" y="1" width="16" height="21" fill="#f6f2ee"/><ellipse cx="9" cy="12.5" rx="6.8" ry="9" fill="#c8a08c"/><ellipse cx="9" cy="6" rx="6.3" ry="4.2" fill="#cbbba6"/><rect x="3.5" y="10.5" width="11" height="2" fill="#8a5a48" opacity="0.55"/><rect x="5" y="16" width="8" height="1.3" fill="#9a6a58" opacity="0.5"/></svg>
<svg class="ic" style="left:482px;top:15px" width="16" height="16" viewBox="0 0 16 16"><rect x="0" y="0" width="16" height="16" rx="2.5" fill="#3f7186"/><rect x="1" y="1" width="3" height="14" fill="#5e8ea0" opacity="0.6"/><rect x="6.5" y="2" width="3" height="3" fill="#fff"/><rect x="6.5" y="6" width="3" height="8" fill="#fff"/></svg>
<svg class="ic" style="left:504px;top:15px" width="16" height="16" viewBox="0 0 16 16"><rect x="0" y="0" width="16" height="16" fill="#100818"/><rect x="1" y="1" width="7" height="7" fill="#ff1010"/><rect x="9" y="1" width="7" height="7" fill="#10f010"/><rect x="1" y="9" width="7" height="7" fill="#0808f0"/><rect x="9" y="9" width="7" height="7" fill="#ff10f8"/></svg>
<div class="t " style="left:526.5px;top:12.22px;font-size:19px;line-height:24px;color:#173c52;letter-spacing:-0.1px">M1 (INN)</div>
<svg class="ic" style="left:609px;top:19px" width="18" height="12" viewBox="0 0 18 12"><path d="M3 0.5H17.5L15 11.5H0.5z" fill="#2f2ff0" stroke="#1a1aa0" stroke-width="1"/></svg>
<div class="t " style="left:632.5px;top:12.22px;font-size:19px;line-height:24px;color:#173c52;letter-spacing:-0.3px">Zi. 01: Basche, Hans</div>
<svg class="ic" style="left:810px;top:14px" width="14" height="17" viewBox="0 0 14 17"><path d="M2 17Q2 11 7 11Q12 11 12 17z" fill="#f3e6d8"/><ellipse cx="7" cy="7" rx="4" ry="5" fill="#f0d2b5"/><path d="M2.5 6Q3 0.5 7 1Q11 0.5 11.5 6L10.5 4.5L3.5 4.5z" fill="#222"/></svg>
<div class="t " style="left:831px;top:12.22px;font-size:19px;line-height:24px;color:#173c52;letter-spacing:-0.05px">02.08.1935 (86J) (111001 06.02.2022 - gepl.: 21.02.2022)</div>
<svg class="ic" style="left:1321px;top:15px" width="16" height="16" viewBox="0 0 16 16"><path d="M8 0.6L15.8 15.4H0.2z" fill="#e01818" stroke="#a00000" stroke-width="0.6" stroke-linejoin="round"/><rect x="6.8" y="4.8" width="2.4" height="5.8" fill="#fff"/><rect x="6.8" y="11.8" width="2.4" height="2.2" fill="#fff"/></svg>
<svg class="ic" style="left:1341px;top:15px" width="16" height="16" viewBox="0 0 16 16"><path d="M8 0.6L15.8 15.4H0.2z" fill="#1010d0" stroke="#000080" stroke-width="0.6" stroke-linejoin="round"/><rect x="6.8" y="4.8" width="2.4" height="5.8" fill="#fff"/><rect x="6.8" y="11.8" width="2.4" height="2.2" fill="#fff"/></svg>
<svg class="ic" style="left:1369px;top:15px" width="12" height="17" viewBox="0 0 12 17"><path d="M3 8V4.2a3 3 0 0 1 6 0V8" fill="none" stroke="#5a4a20" stroke-width="1.6"/><defs><linearGradient id="lk1369" x1="0" y1="0" x2="1" y2="0"><stop offset="0" stop-color="#c9a850"/><stop offset="0.5" stop-color="#ecd690"/><stop offset="1" stop-color="#b89440"/></linearGradient></defs><rect x="0.5" y="7" width="11" height="10" rx="1" fill="url(#lk1369)"/><rect x="0.5" y="7" width="11" height="10" rx="1" fill="none" stroke="#a88a3a" stroke-width="0.8"/></svg>
<svg class="ic" style="left:1391px;top:16px" width="14" height="15" viewBox="0 0 14 15"><rect x="0" y="0" width="14" height="15" rx="1.5" fill="#dde2e5"/><rect x="0.5" y="0.5" width="13" height="14" rx="1.5" fill="none" stroke="#c2c8cc"/><text x="1.8" y="10" font-family="Liberation Sans" font-weight="bold" font-size="7" fill="#1e3a4a">PT</text></svg>
<div style="position:absolute;left:458px;top:59px;width:1423px;height:36px;background:linear-gradient(180deg,#4d6a74 0,#4d6a74 2.8%,#5b8797 3%,#44778a 25%,#2d6878 50%,#1c5a6c 72%,#0d4660 86%,#1a586c 88%,#053a50 90%,#063a4e 94%,#134c60 95%,#0a3a50 97%,#05293c 100%)"></div>
<div class="t " style="left:463.5px;top:67.07px;font-size:20px;line-height:24px;color:#fff;letter-spacing:-0.05px">DRG-Datensatz</div>
<div class="t " style="left:1843px;top:98.24px;font-size:12px;line-height:16px;color:#0f3347;font-weight:bold;text-decoration:underline;letter-spacing:0.4px">Hilfe</div>
<div class="t lb" style="left:459px;top:118.84px;font-size:12px;line-height:16px;">DRG</div>
<div style="position:absolute;left:660px;top:117px;width:143px;height:33px;background:#e2e7ea"></div>
<div class="t vl" style="left:662px;top:118.84px;font-size:12px;line-height:16px;">G47B</div>
<div class="t lb" style="left:837px;top:118.84px;font-size:12px;line-height:16px;">DRG-Beschreibung</div>
<div style="position:absolute;left:1010px;top:117px;width:871px;height:33px;background:#e2e7ea"></div>
<div class="t vl" style="left:1011.5px;top:118.84px;font-size:12px;line-height:16px;letter-spacing:0.32px;word-spacing:0.6px">Andere Gastroskopie oder bestimmte koloskopische Eingriffe, Alter &gt; 15 Jahre, ohne endoskopische submukosale Dissektion am Dickdarm oder mehr</div>
<div class="t vl" style="left:1011.5px;top:134.84px;font-size:12px;line-height:16px;">als ein Belegungstag</div>
<div class="t lb" style="left:459px;top:154.84px;font-size:12px;line-height:16px;">MDC</div>
<div style="position:absolute;left:660px;top:153px;width:143px;height:17px;background:#e2e7ea"></div>
<div class="t vl" style="left:662px;top:154.84px;font-size:12px;line-height:16px;">06</div>
<div class="t lb" style="left:837px;top:154.84px;font-size:12px;line-height:16px;">MDC-Beschreibung</div>
<div style="position:absolute;left:1010px;top:153px;width:871px;height:17px;background:#e2e7ea"></div>
<div class="t vl" style="left:1011.5px;top:154.84px;font-size:12px;line-height:16px;letter-spacing:0.25px;word-spacing:0.5px">MDC 06 Krankheiten und Störungen der Verdauungsorgane Grouper: G192-ICD10_GM2021-OPS_2021</div>
<div class="t lb" style="left:459px;top:174.84px;font-size:12px;line-height:16px;">Partition</div>
<div style="position:absolute;left:660px;top:174px;width:143px;height:19px;background:#e2e7ea"></div>
<div class="t vl" style="left:662px;top:174.84px;font-size:12px;line-height:16px;">A</div>
<div class="t lb" style="left:1187px;top:174.84px;font-size:12px;line-height:16px;">Status</div>
<svg class="ic" style="left:1361px;top:174px" width="16" height="16" viewBox="0 0 16 16"><path d="M3.2 6.5L5.8 13.6L14 2.8" fill="none" stroke="#2a7a10" stroke-width="4.2" stroke-linecap="round" stroke-linejoin="round"/><path d="M3.2 6.5L5.8 13.6L14 2.8" fill="none" stroke="#4cb020" stroke-width="2.2" stroke-linecap="round" stroke-linejoin="round"/></svg>
<div style="position:absolute;left:1535px;top:174px;width:346px;height:18px;background:#e2e7ea"></div>
<div class="t lb" style="left:459px;top:196.84px;font-size:12px;line-height:16px;">PCCL</div>
<div style="position:absolute;left:660px;top:196px;width:143px;height:18px;background:#e2e7ea"></div>
<div class="t vl" style="left:662px;top:196.84px;font-size:12px;line-height:16px;">0</div>
<div class="t lb" style="left:837px;top:196.84px;font-size:12px;line-height:16px;">CW</div>
<div style="position:absolute;left:1010px;top:196px;width:143px;height:18px;background:#e2e7ea"></div>
<div class="t vl" style="left:1012px;top:196.84px;font-size:12px;line-height:16px;">0,712</div>
<div class="t lb" style="left:1187px;top:196.84px;font-size:12px;line-height:16px;">Beatmungsstunden</div>
<div style="position:absolute;left:1360px;top:196px;width:143px;height:18px;background:#e2e7ea"></div>
<div class="t vl" style="left:1362px;top:196.84px;font-size:12px;line-height:16px;">51</div>
<div style="position:absolute;left:1738px;top:196px;width:143px;height:18px;background:#e2e7ea"></div>
<div class="t vl" style="left:1740px;top:196.84px;font-size:12px;line-height:16px;">0</div>
<svg class="ic" style="left:1537px;top:196px" width="15" height="13" viewBox="0 0 15 13"><path d="M1 12L2 9L9 2L11 4L4 11z" fill="#f2c94c" stroke="#b08a20" stroke-width="0.6"/><path d="M9 2L11 0.5L13 2.5L11 4z" fill="#d25a5a"/><path d="M0 12.5h8" stroke="#8fb0d8" stroke-width="1"/></svg>
<div class="t lb" style="left:1552px;top:198.34px;font-size:12px;line-height:16px;color:#1f3f52;text-decoration:underline;letter-spacing:0.3px"> Abschlagstage</div>
<div class="t lb" style="left:459px;top:218.84px;font-size:12px;line-height:16px;">Aktuelle VWD</div>
<div style="position:absolute;left:660px;top:217px;width:143px;height:17px;background:#e2e7ea"></div>
<div class="t vl" style="left:662px;top:218.84px;font-size:12px;line-height:16px;">7</div>
<div class="t lb" style="left:837px;top:218.84px;font-size:12px;line-height:16px;">DVWD</div>
<div style="position:absolute;left:1010px;top:217px;width:143px;height:17px;background:#e2e7ea"></div>
<div class="t vl" style="left:1012px;top:218.84px;font-size:12px;line-height:16px;">5,40</div>
<div class="t lb" style="left:1187px;top:218.84px;font-size:12px;line-height:16px;">UGVWD</div>
<div style="position:absolute;left:1360px;top:217px;width:143px;height:17px;background:#e2e7ea"></div>
<div class="t vl" style="left:1362px;top:218.84px;font-size:12px;line-height:16px;">1</div>
<div class="t lb" style="left:1536px;top:218.84px;font-size:12px;line-height:16px;">OGVWD</div>
<div style="position:absolute;left:1738px;top:217px;width:143px;height:17px;background:#e2e7ea"></div>
<div class="t vl" style="left:1740px;top:218.84px;font-size:12px;line-height:16px;">13</div>
<div class="t lb" style="left:459px;top:238.84px;font-size:12px;line-height:16px;">Basisentgelt</div>
<div style="position:absolute;left:660px;top:237px;width:143px;height:17px;background:#e2e7ea"></div>
<div class="t vl" style="left:662px;top:238.84px;font-size:12px;line-height:16px;">2.615,50 Euro</div>
<div class="t lb" style="left:837px;top:238.84px;font-size:12px;line-height:16px;">Effektiver Erlös</div>
<div style="position:absolute;left:1010px;top:237px;width:143px;height:17px;background:#e2e7ea"></div>
<div class="t vl" style="left:1012px;top:238.84px;font-size:12px;line-height:16px;">2.615,50 Euro</div>
<div class="t lb" style="left:1187px;top:238.84px;font-size:12px;line-height:16px;">Berech. Tagesentgelt</div>
<div style="position:absolute;left:1360px;top:237px;width:143px;height:17px;background:#e2e7ea"></div>
<div class="t vl" style="left:1362px;top:238.84px;font-size:12px;line-height:16px;">373,64 Euro</div>
<div class="t lb" style="left:1536px;top:238.84px;font-size:12px;line-height:16px;">Basisfallwert</div>
<div style="position:absolute;left:1738px;top:237px;width:143px;height:17px;background:#e2e7ea"></div>
<div class="t vl" style="left:1740px;top:238.84px;font-size:12px;line-height:16px;">3.673,45 Euro</div>
<div class="t lb" style="left:459px;top:258.84px;font-size:12px;line-height:16px;">Zu/Abschlag</div>
<div style="position:absolute;left:660px;top:257px;width:143px;height:17px;background:#e2e7ea"></div>
<div class="t vl" style="left:662px;top:258.84px;font-size:12px;line-height:16px;">0,00 Euro</div>
<div class="t lb" style="left:837px;top:258.84px;font-size:12px;line-height:16px;">Zu/Abschlag pro Tag</div>
<div style="position:absolute;left:1010px;top:257px;width:143px;height:17px;background:#e2e7ea"></div>
<div class="t vl" style="left:1012px;top:258.84px;font-size:12px;line-height:16px;">0,00 Euro</div>
<div class="t lb" style="left:1187px;top:258.84px;font-size:12px;line-height:16px;">Anz. Tage</div>
<div style="position:absolute;left:1360px;top:257px;width:143px;height:17px;background:#e2e7ea"></div>
<div class="t vl" style="left:1362px;top:258.84px;font-size:12px;line-height:16px;">0</div>
<div class="t " style="left:459px;top:280.84px;font-size:12px;line-height:16px;font-weight:bold;color:#333;letter-spacing:0.95px">Pflegeentgelt-Berechnung</div>
<div class="t lb" style="left:459px;top:300.84px;font-size:12px;line-height:16px;">Pflegebewert./Tag</div>
<div style="position:absolute;left:660px;top:299px;width:143px;height:17px;background:#e2e7ea"></div>
<div class="t vl" style="left:662px;top:300.84px;font-size:12px;line-height:16px;">0,6705</div>
<div class="t lb" style="left:837px;top:300.84px;font-size:12px;line-height:16px;">Berech.-Tage Pflegeerlös</div>
<div style="position:absolute;left:1010px;top:299px;width:143px;height:17px;background:#e2e7ea"></div>
<div class="t vl" style="left:1012px;top:300.84px;font-size:12px;line-height:16px;">7</div>
<div class="t lb" style="left:1187px;top:300.84px;font-size:12px;line-height:16px;">Pflegeerlös/Tag</div>
<div style="position:absolute;left:1360px;top:299px;width:143px;height:17px;background:#e2e7ea"></div>
<div class="t vl" style="left:1362px;top:300.84px;font-size:12px;line-height:16px;">109,35 Euro</div>
<div class="t lb" style="left:1536px;top:300.84px;font-size:12px;line-height:16px;">Pflegeerlös gesamt</div>
<div style="position:absolute;left:1738px;top:299px;width:143px;height:17px;background:#e2e7ea"></div>
<div class="t vl" style="left:1740px;top:300.84px;font-size:12px;line-height:16px;">765,45 Euro</div>
<div class="t lb" style="left:459px;top:320.84px;font-size:12px;line-height:16px;">Pflegeentgelt-Wert</div>
<div style="position:absolute;left:660px;top:320px;width:143px;height:16px;background:#e2e7ea"></div>
<div class="t vl" style="left:662px;top:320.84px;font-size:12px;line-height:16px;">163,09 Euro</div>
<div style="position:absolute;left:456px;top:359px;width:1441px;height:134px;border:1px solid #2c3f48;background:#fff"></div>
<div style="position:absolute;left:457px;top:360px;width:1439px;height:22px;background:#cfdbe0"></div>
<div style="position:absolute;left:457px;top:382px;width:1439px;height:1px;background:#2c3f48"></div>
<div class="t hd" style="left:1118.5px;top:363.24px;font-size:12px;line-height:16px;letter-spacing:0.93px">DRG-Verweildauer</div>
<div style="position:absolute;left:475px;top:436px;width:88px;height:3px;background:#e80000"></div>
<div style="position:absolute;left:563px;top:436px;width:1058px;height:3px;background:#00e000"></div>
<div style="position:absolute;left:1621px;top:436px;width:258px;height:3px;background:#e80000"></div>
<div style="position:absolute;left:474px;top:431px;width:3px;height:13px;background:#000"></div>
<div class="t" style="left:435.0px;top:448.0px;width:80px;text-align:center;font-size:12px;line-height:16px;color:#111;-webkit-text-stroke:0">0</div>
<div style="position:absolute;left:562px;top:431px;width:3px;height:13px;background:#000"></div>
<div class="t" style="left:523.2px;top:448.0px;width:80px;text-align:center;font-size:12px;line-height:16px;color:#111;-webkit-text-stroke:0">1</div>
<div style="position:absolute;left:650px;top:431px;width:3px;height:13px;background:#000"></div>
<div class="t" style="left:611.3px;top:448.0px;width:80px;text-align:center;font-size:12px;line-height:16px;color:#111;-webkit-text-stroke:0">2</div>
<div style="position:absolute;left:739px;top:431px;width:3px;height:13px;background:#000"></div>
<div class="t" style="left:699.5px;top:448.0px;width:80px;text-align:center;font-size:12px;line-height:16px;color:#111;-webkit-text-stroke:0">3</div>
<div style="position:absolute;left:827px;top:431px;width:3px;height:13px;background:#000"></div>
<div class="t" style="left:787.7px;top:448.0px;width:80px;text-align:center;font-size:12px;line-height:16px;color:#111;-webkit-text-stroke:0">4</div>
<div style="position:absolute;left:915px;top:431px;width:3px;height:13px;background:#000"></div>
<div class="t" style="left:875.9px;top:448.0px;width:80px;text-align:center;font-size:12px;line-height:16px;color:#111;-webkit-text-stroke:0">5</div>
<div style="position:absolute;left:1003px;top:431px;width:3px;height:13px;background:#000"></div>
<div class="t" style="left:964.0px;top:448.0px;width:80px;text-align:center;font-size:12px;line-height:16px;color:#111;-webkit-text-stroke:0">6</div>
<div style="position:absolute;left:1091px;top:431px;width:3px;height:13px;background:#000"></div>
<div class="t" style="left:1052.2px;top:448.0px;width:80px;text-align:center;font-size:12px;line-height:16px;color:#111;-webkit-text-stroke:0">7</div>
<div style="position:absolute;left:1179px;top:431px;width:3px;height:13px;background:#000"></div>
<div class="t" style="left:1140.4px;top:448.0px;width:80px;text-align:center;font-size:12px;line-height:16px;color:#111;-webkit-text-stroke:0">8</div>
<div style="position:absolute;left:1268px;top:431px;width:3px;height:13px;background:#000"></div>
<div class="t" style="left:1228.5px;top:448.0px;width:80px;text-align:center;font-size:12px;line-height:16px;color:#111;-webkit-text-stroke:0">9</div>
<div style="position:absolute;left:1356px;top:431px;width:3px;height:13px;background:#000"></div>
<div class="t" style="left:1330.2px;top:448.0px;width:40px;text-align:center;font-size:12px;line-height:16px;color:#111;-webkit-text-stroke:0">1</div>
<div class="t" style="left:1343.1px;top:448.0px;width:40px;text-align:center;font-size:12px;line-height:16px;color:#111;-webkit-text-stroke:0">0</div>
<div style="position:absolute;left:1444px;top:431px;width:3px;height:13px;background:#000"></div>
<div class="t" style="left:1418.4px;top:448.0px;width:40px;text-align:center;font-size:12px;line-height:16px;color:#111;-webkit-text-stroke:0">1</div>
<div class="t" style="left:1431.3px;top:448.0px;width:40px;text-align:center;font-size:12px;line-height:16px;color:#111;-webkit-text-stroke:0">1</div>
<div style="position:absolute;left:1532px;top:431px;width:3px;height:13px;background:#000"></div>
<div class="t" style="left:1506.5px;top:448.0px;width:40px;text-align:center;font-size:12px;line-height:16px;color:#111;-webkit-text-stroke:0">1</div>
<div class="t" style="left:1519.4px;top:448.0px;width:40px;text-align:center;font-size:12px;line-height:16px;color:#111;-webkit-text-stroke:0">2</div>
<div style="position:absolute;left:1620px;top:431px;width:3px;height:13px;background:#000"></div>
<div class="t" style="left:1594.7px;top:448.0px;width:40px;text-align:center;font-size:12px;line-height:16px;color:#111;-webkit-text-stroke:0">1</div>
<div class="t" style="left:1607.6px;top:448.0px;width:40px;text-align:center;font-size:12px;line-height:16px;color:#111;-webkit-text-stroke:0">3</div>
<div style="position:absolute;left:1708px;top:431px;width:3px;height:13px;background:#000"></div>
<div class="t" style="left:1682.9px;top:448.0px;width:40px;text-align:center;font-size:12px;line-height:16px;color:#111;-webkit-text-stroke:0">1</div>
<div class="t" style="left:1695.8px;top:448.0px;width:40px;text-align:center;font-size:12px;line-height:16px;color:#111;-webkit-text-stroke:0">4</div>
<div style="position:absolute;left:1797px;top:431px;width:3px;height:13px;background:#000"></div>
<div class="t" style="left:1771.0px;top:448.0px;width:40px;text-align:center;font-size:12px;line-height:16px;color:#111;-webkit-text-stroke:0">1</div>
<div class="t" style="left:1784.0px;top:448.0px;width:40px;text-align:center;font-size:12px;line-height:16px;color:#111;-webkit-text-stroke:0">5</div>
<div style="position:absolute;left:1878px;top:431px;width:3px;height:13px;background:#000"></div>
<div style="position:absolute;left:1067px;top:428px;width:51px;height:18px;background:#ffff00;border:1px solid #000"></div>
<div class="t" style="left:1065.8px;top:428.7px;width:51px;text-align:center;font-size:12.5px;line-height:16px;color:#111;transform:scaleX(1.27);transform-origin:25.5px 50%">vwd</div>
<div style="position:absolute;left:456px;top:503px;width:1440px;height:23px;background:#cedadd"></div>
<div style="position:absolute;left:456px;top:525px;width:1440px;height:1px;background:#b6c4c7"></div>
<div style="position:absolute;left:456px;top:503px;width:1px;height:92px;background:#d6dcdf"></div>
<div style="position:absolute;left:568px;top:503px;width:1px;height:92px;background:#d6dcdf"></div>
<div style="position:absolute;left:1560px;top:503px;width:1px;height:92px;background:#d6dcdf"></div>
<div style="position:absolute;left:1672px;top:503px;width:1px;height:92px;background:#d6dcdf"></div>
<div style="position:absolute;left:1784px;top:503px;width:1px;height:92px;background:#d6dcdf"></div>
<div style="position:absolute;left:1896px;top:503px;width:1px;height:92px;background:#d6dcdf"></div>
<div style="position:absolute;left:456px;top:548px;width:1440px;height:1px;background:#d6dcdf"></div>
<div style="position:absolute;left:456px;top:571px;width:1440px;height:1px;background:#d6dcdf"></div>
<div style="position:absolute;left:456px;top:594px;width:1440px;height:1px;background:#d6dcdf"></div>
<div style="position:absolute;left:456px;top:503px;width:1440px;height:1px;background:#b9c3c6"></div>
<div class="t hd" style="left:456px;width:112px;text-align:center;top:507.5px;font-size:12px;line-height:16px">ICD</div>
<div class="t hd" style="left:570px;top:507.34px;font-size:12px;line-height:16px;">Beschreibung</div>
<div class="t hd" style="left:1560px;width:112px;text-align:center;top:507.5px;font-size:12px;line-height:16px">Gültig</div>
<div class="t hd" style="left:1672px;width:112px;text-align:center;top:507.5px;font-size:12px;line-height:16px">CCL</div>
<div class="t hd" style="left:1784px;width:112px;text-align:center;top:507.5px;font-size:12px;line-height:16px">DRG-Relevanz</div>
<div class="t lb" style="left:456px;width:112px;text-align:center;top:529.5px;font-size:12px;line-height:16px;font-weight:bold;">K26.4</div>
<div class="t lb" style="left:572px;top:529.34px;font-size:12px;line-height:16px;letter-spacing:0.3px;word-spacing:0.6px">Ulcus duodeni: Chronisch oder nicht näher bezeichnet, mit Blutung</div>
<svg class="ic" style="left:1608px;top:529px" width="16" height="16" viewBox="0 0 16 16"><path d="M3.2 6.5L5.8 13.6L14 2.8" fill="none" stroke="#2a7a10" stroke-width="4.2" stroke-linecap="round" stroke-linejoin="round"/><path d="M3.2 6.5L5.8 13.6L14 2.8" fill="none" stroke="#4cb020" stroke-width="2.2" stroke-linecap="round" stroke-linejoin="round"/></svg>
<div class="t lb" style="left:1672px;width:112px;text-align:center;top:529.5px;font-size:12px;line-height:16px;">0</div>
<svg class="ic" style="left:1832px;top:529px" width="16" height="16" viewBox="0 0 16 16"><path d="M3.2 6.5L5.8 13.6L14 2.8" fill="none" stroke="#2a7a10" stroke-width="4.2" stroke-linecap="round" stroke-linejoin="round"/><path d="M3.2 6.5L5.8 13.6L14 2.8" fill="none" stroke="#4cb020" stroke-width="2.2" stroke-linecap="round" stroke-linejoin="round"/></svg>
<div class="t lb" style="left:456px;width:112px;text-align:center;top:552.5px;font-size:12px;line-height:16px;">K92.2</div>
<div class="t lb" style="left:572px;top:552.34px;font-size:12px;line-height:16px;letter-spacing:0.3px;word-spacing:0.6px">Gastrointestinale Blutung, nicht näher bezeichnet</div>
<svg class="ic" style="left:1608px;top:552px" width="16" height="16" viewBox="0 0 16 16"><path d="M3.2 6.5L5.8 13.6L14 2.8" fill="none" stroke="#2a7a10" stroke-width="4.2" stroke-linecap="round" stroke-linejoin="round"/><path d="M3.2 6.5L5.8 13.6L14 2.8" fill="none" stroke="#4cb020" stroke-width="2.2" stroke-linecap="round" stroke-linejoin="round"/></svg>
<div class="t lb" style="left:1672px;width:112px;text-align:center;top:552.5px;font-size:12px;line-height:16px;">0</div>
<svg class="ic" style="left:1832px;top:552px" width="16" height="16" viewBox="0 0 16 16"><path d="M3 3.5L13 13.5M12.5 2.5L3.5 13" fill="none" stroke="#b00808" stroke-width="4" stroke-linecap="round"/><path d="M3 3.5L13 13.5M12.5 2.5L3.5 13" fill="none" stroke="#e01818" stroke-width="2" stroke-linecap="round"/></svg>
<div class="t lb" style="left:456px;width:112px;text-align:center;top:575.5px;font-size:12px;line-height:16px;">K92.0</div>
<div class="t lb" style="left:572px;top:575.34px;font-size:12px;line-height:16px;letter-spacing:0.3px;word-spacing:0.6px">Hämatemesis</div>
<svg class="ic" style="left:1608px;top:575px" width="16" height="16" viewBox="0 0 16 16"><path d="M3.2 6.5L5.8 13.6L14 2.8" fill="none" stroke="#2a7a10" stroke-width="4.2" stroke-linecap="round" stroke-linejoin="round"/><path d="M3.2 6.5L5.8 13.6L14 2.8" fill="none" stroke="#4cb020" stroke-width="2.2" stroke-linecap="round" stroke-linejoin="round"/></svg>
<div class="t lb" style="left:1672px;width:112px;text-align:center;top:575.5px;font-size:12px;line-height:16px;">0</div>
<svg class="ic" style="left:1832px;top:576px" width="16" height="16" viewBox="0 0 16 16"><path d="M3 3.5L13 13.5M12.5 2.5L3.5 13" fill="none" stroke="#b00808" stroke-width="4" stroke-linecap="round"/><path d="M3 3.5L13 13.5M12.5 2.5L3.5 13" fill="none" stroke="#e01818" stroke-width="2" stroke-linecap="round"/></svg>
<div style="position:absolute;left:456px;top:606px;width:1440px;height:23px;background:#cedadd"></div>
<div style="position:absolute;left:456px;top:628px;width:1440px;height:1px;background:#b6c4c7"></div>
<div style="position:absolute;left:456px;top:606px;width:1px;height:46px;background:#d6dcdf"></div>
<div style="position:absolute;left:568px;top:606px;width:1px;height:46px;background:#d6dcdf"></div>
<div style="position:absolute;left:1560px;top:606px;width:1px;height:46px;background:#d6dcdf"></div>
<div style="position:absolute;left:1672px;top:606px;width:1px;height:46px;background:#d6dcdf"></div>
<div style="position:absolute;left:1784px;top:606px;width:1px;height:46px;background:#d6dcdf"></div>
<div style="position:absolute;left:1896px;top:606px;width:1px;height:46px;background:#d6dcdf"></div>
<div style="position:absolute;left:456px;top:651px;width:1440px;height:1px;background:#d6dcdf"></div>
<div style="position:absolute;left:456px;top:606px;width:1440px;height:1px;background:#b9c3c6"></div>
<div class="t hd" style="left:456px;width:112px;text-align:center;top:610.5px;font-size:12px;line-height:16px">OPS</div>
<div class="t hd" style="left:570px;top:610.34px;font-size:12px;line-height:16px;">Beschreibung</div>
<div class="t hd" style="left:1560px;width:112px;text-align:center;top:610.5px;font-size:12px;line-height:16px">Gültig</div>
<div class="t hd" style="left:1784px;width:112px;text-align:center;top:610.5px;font-size:12px;line-height:16px">DRG-Relevanz</div>
<div class="t lb" style="left:456px;width:112px;text-align:center;top:632.5px;font-size:12px;line-height:16px;">5-451.91</div>
<div class="t lb" style="left:572px;top:632.34px;font-size:12px;line-height:16px;letter-spacing:0.3px;word-spacing:0.6px">Lokale Exzision und Destruktion von erkranktem Gewebe des Dünndarmes: Destruktion, endoskopisch, einfach (Push-Technik): Laserkoagulation</div>
<svg class="ic" style="left:1608px;top:632px" width="16" height="16" viewBox="0 0 16 16"><path d="M3.2 6.5L5.8 13.6L14 2.8" fill="none" stroke="#2a7a10" stroke-width="4.2" stroke-linecap="round" stroke-linejoin="round"/><path d="M3.2 6.5L5.8 13.6L14 2.8" fill="none" stroke="#4cb020" stroke-width="2.2" stroke-linecap="round" stroke-linejoin="round"/></svg>
<div class="t lb" style="left:1672px;width:112px;text-align:center;top:632.5px;font-size:12px;line-height:16px;"></div>
<svg class="ic" style="left:1832px;top:632px" width="16" height="16" viewBox="0 0 16 16"><path d="M3.2 6.5L5.8 13.6L14 2.8" fill="none" stroke="#2a7a10" stroke-width="4.2" stroke-linecap="round" stroke-linejoin="round"/><path d="M3.2 6.5L5.8 13.6L14 2.8" fill="none" stroke="#4cb020" stroke-width="2.2" stroke-linecap="round" stroke-linejoin="round"/></svg>
<div class="t lb" style="left:459px;top:666.84px;font-size:12px;line-height:16px;">Aufnahmeart</div>
<div style="position:absolute;left:657px;top:665px;width:143px;height:17px;background:#e2e7ea"></div>
<div class="t vl" style="left:659px;top:666.84px;font-size:12px;line-height:16px;">Normalfall</div>
<div class="t lb" style="left:833.5px;top:666.84px;font-size:12px;line-height:16px;">Entlassungsgrund</div>
<div style="position:absolute;left:1004px;top:665px;width:141px;height:17px;background:#e2e7ea"></div>
<div class="t lb" style="left:1179px;top:666.84px;font-size:12px;line-height:16px;">Abteilungstyp</div>
<div style="position:absolute;left:1350px;top:665px;width:140px;height:17px;background:#e2e7ea"></div>
<div class="t vl" style="left:1352px;top:666.84px;font-size:12px;line-height:16px;">HA</div>
<div class="t lb" style="left:1524.5px;top:666.84px;font-size:12px;line-height:16px;">Verweildauer Intensiv</div>
<div style="position:absolute;left:1723px;top:665px;width:141px;height:17px;background:#e2e7ea"></div>
<div class="t vl" style="left:1725px;top:666.84px;font-size:12px;line-height:16px;">0</div>
<div class="t lb" style="left:459px;top:686.59px;font-size:12px;line-height:16px;">Alter in Jahren</div>
<div style="position:absolute;left:657px;top:685px;width:143px;height:17px;background:#e2e7ea"></div>
<div class="t vl" style="left:659px;top:686.59px;font-size:12px;line-height:16px;">86</div>
<div class="t lb" style="left:833.5px;top:686.59px;font-size:12px;line-height:16px;">Geschlecht</div>
<div style="position:absolute;left:1004px;top:685px;width:141px;height:17px;background:#e2e7ea"></div>
<div class="t vl" style="left:1006px;top:686.59px;font-size:12px;line-height:16px;">1</div>
<div class="t lb" style="left:1179px;top:686.59px;font-size:12px;line-height:16px;">Geburtsgewicht</div>
<div style="position:absolute;left:1350px;top:685px;width:140px;height:17px;background:#e2e7ea"></div>
<div class="t vl" style="left:1352px;top:686.59px;font-size:12px;line-height:16px;">0</div>
<div class="t lb" style="left:1524.5px;top:686.59px;font-size:12px;line-height:16px;">Abwesenheitstage</div>
<div style="position:absolute;left:1723px;top:685px;width:141px;height:17px;background:#e2e7ea"></div>
<div class="t vl" style="left:1725px;top:686.59px;font-size:12px;line-height:16px;">2</div>
<div class="t lb" style="left:459px;top:706.34px;font-size:12px;line-height:16px;">Schwangerschaftstag</div>
<div style="position:absolute;left:657px;top:706px;width:143px;height:17px;background:#e2e7ea"></div>
<div class="t vl" style="left:659px;top:706.34px;font-size:12px;line-height:16px;">0</div>
<div style="position:absolute;left:458px;top:747px;width:1437px;height:20px;background:linear-gradient(180deg,#dbe3e2 0,#d3dde0 30%,#c9d5da 70%,#b9c8cf 85%,#c2cfd5 100%)"></div>
<div class="t hd" style="left:464px;top:749.44px;font-size:12px;line-height:16px;letter-spacing:0.4px;color:#0f3547">ID Diacos KRCheck Ergebnis</div>
<div style="position:absolute;left:459px;top:795px;width:1437px;height:2px;background:#555"></div>
<div style="position:absolute;left:459px;top:842px;width:1437px;height:2px;background:#555"></div>
<div style="position:absolute;left:459px;top:889px;width:1437px;height:2px;background:#555"></div>
<div style="position:absolute;left:459px;top:936.5px;width:1437px;height:2px;background:#555"></div>
<div style="position:absolute;left:459px;top:983.5px;width:1437px;height:2px;background:#555"></div>
<div style="position:absolute;left:459px;top:1036.5px;width:1437px;height:2px;background:#555"></div>
<div class="t lb" style="left:459px;top:803.7px;font-size:12px;line-height:16px;letter-spacing:0.22px;word-spacing:0.3px"><b style="color:#2222c8;letter-spacing:0.9px">Warnung</b> <span style="color:#2a2ab5">DKR</span> 1105d KombinationsCode inklusive Blutung</div>
<div class="t lb" style="left:459px;top:819.54px;font-size:12px;line-height:16px;letter-spacing:0.3px;word-spacing:0.5px">Sie sollten die Diagnose K92.2 K92.0 entfernen!</div>
<div class="t lb" style="left:459px;top:851.3px;font-size:12px;line-height:16px;letter-spacing:0.35px;word-spacing:0.5px"><b style="color:#2222c8;letter-spacing:0.9px">Warnung</b> <span style="color:#2a2ab5">DKR</span> 7</div>
<div class="t lb" style="left:459px;top:867.14px;font-size:12px;line-height:16px;letter-spacing:0.42px;word-spacing:0.6px">Zusätzlich zur Dauer der maschinellen Beatmung müssen auch die Art der Intubation (8-701; 8-704; 8-706) und/oder der Tracheotomie (5-311; 5-312) codiert werden.</div>
<div class="t lb" style="left:459px;top:898.7px;font-size:12px;line-height:16px;letter-spacing:0.35px;word-spacing:0.5px"><b style="color:#2222c8;letter-spacing:0.9px">Warnung</b> <span style="color:#2a2ab5">Med. Plausibilitäten</span> Beatmungsdauer ohne resp. Insuffizienz</div>
<div class="t lb" style="left:459px;top:914.54px;font-size:12px;line-height:16px;letter-spacing:0.3px;word-spacing:0.5px">Bitte ergänzen Sie einen Code aus J96.- oder J95.1 bis -.3 !</div>
<div class="t lb" style="left:459px;top:945.7px;font-size:12px;line-height:16px;letter-spacing:0.35px;word-spacing:0.5px"><b style="color:#1f8a1f;letter-spacing:0.9px">Hinweis</b> <span style="color:#2a2ab5">Abrechnung</span> OPS am Aufnahmetag</div>
<div class="t lb" style="left:459px;top:961.54px;font-size:12px;line-height:16px;letter-spacing:0.38px;word-spacing:0.6px">Bitte prüfen Sie, ob am Aufnahmetag tatsächlich keine Leistungen erbracht wurden.</div>
<div class="t lb" style="left:459px;top:993.2px;font-size:12px;line-height:16px;letter-spacing:0.0px;word-spacing:-0.3px"><b style="color:#1f8a1f;letter-spacing:0.9px">Hinweis</b> <span style="color:#2a2ab5">DRG</span> Plausi</div>
<div class="t lb" style="left:459px;top:1009.04px;font-size:12px;line-height:16px;letter-spacing:0.46px;word-spacing:0.6px">Die berechnete Verweildauer wird verwendet.</div>
<div style="position:absolute;left:518px;top:1050px;width:134px;height:40px;border:1px solid #5a5a5a;background:linear-gradient(180deg,#fdfdfd 0,#f4f4f4 40%,#e2e2e2 100%)"></div>
<div class="t" style="left:518px;width:134px;text-align:center;top:1060.6px;font-size:12px;line-height:16px;font-weight:bold;color:#0f3a50;letter-spacing:0.6px">Grouper</div>
<div style="position:absolute;left:937px;top:1050px;width:134px;height:40px;border:1px solid #5a5a5a;background:linear-gradient(180deg,#fdfdfd 0,#f4f4f4 40%,#e2e2e2 100%)"></div>
<div class="t" style="left:937px;width:134px;text-align:center;top:1060.6px;font-size:12px;line-height:16px;font-weight:bold;color:#0f3a50;letter-spacing:0.6px">Löschen</div>
<div style="position:absolute;left:1281px;top:1050px;width:136px;height:40px;border:1px solid #5a5a5a;background:linear-gradient(180deg,#fdfdfd 0,#f4f4f4 40%,#e2e2e2 100%)"></div>
<div class="t" style="left:1281px;width:136px;text-align:center;top:1060.6px;font-size:12px;line-height:16px;font-weight:bold;color:#a8a8a8;letter-spacing:0.6px">Zurück</div>
<div style="position:absolute;left:1627px;top:1050px;width:134px;height:40px;border:1px solid #5a5a5a;background:linear-gradient(180deg,#fdfdfd 0,#f4f4f4 40%,#e2e2e2 100%)"></div>
<div class="t" style="left:1627px;width:134px;text-align:center;top:1060.6px;font-size:12px;line-height:16px;font-weight:bold;color:#0f3a50;letter-spacing:0.6px">Drucken</div>
</body></html>
